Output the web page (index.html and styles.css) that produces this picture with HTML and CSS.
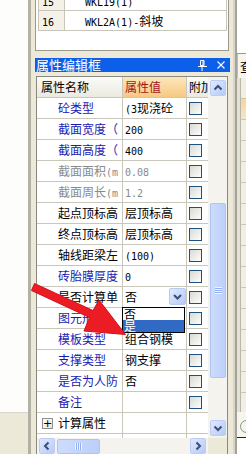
FILE: index.html
```html
<!DOCTYPE html>
<html>
<head>
<meta charset="utf-8">
<link rel="stylesheet" href="styles.css">
</head>
<body>
<div class="screen">
  <div class="leftwin"><div class="lw-top"></div><div class="lw-bot"></div></div>

  <div class="main">
    <div class="list">
      <div class="ltable">
        <div class="lrow"><div class="lnum"><span class="m">15</span></div><div class="lname"><span class="m">WKL19(1)</span></div></div>
        <div class="lrow"><div class="lnum"><span class="m">16</span></div><div class="lname"><span class="m">WKL2A(1)-</span>斜坡</div></div>
      </div>
    </div>

    <div class="titlebar">
      <span class="ttl">属性编辑框</span>
      <span class="ticons">
        <svg width="9" height="11" viewBox="0 0 9 11"><path d="M2.5 0.5h3.5v5h-3.5z" fill="none" stroke="#fff"/><path d="M5 1v4.5" stroke="#fff"/><path d="M0 6.5h9M4 6.5v4.5" stroke="#fff"/></svg>
        <svg width="8" height="8" viewBox="0 0 8 8"><path d="M0.5 0.5l7 7M7.5 0.5l-7 7" stroke="#fff" stroke-width="1.1"/></svg>
      </span>
    </div>

    <div class="grid">
      <div class="gtop">
        <div class="cols">
          <div class="row head">
            <div class="c-name hn">属性名称</div>
            <div class="c-val hv">属性值</div>
            <div class="c-chk hc">附加</div>
          </div>
          <div class="row"><div class="c-name"><span class="nm blue">砼类型</span></div><div class="c-val"><span class="m">(3</span>现浇砼</div><div class="c-chk"><span class="cb"></span></div></div>
          <div class="row"><div class="c-name"><span class="nm blue">截面宽度（mm）</span></div><div class="c-val"><span class="m">200</span></div><div class="c-chk"><span class="cb"></span></div></div>
          <div class="row"><div class="c-name"><span class="nm blue">截面高度（mm）</span></div><div class="c-val"><span class="m">400</span></div><div class="c-chk"><span class="cb"></span></div></div>
          <div class="row"><div class="c-name"><span class="nm gray">截面面积<span class="m">(m²)</span></span></div><div class="c-val gray"><span class="m">0.08</span></div><div class="c-chk"><span class="cb"></span></div></div>
          <div class="row"><div class="c-name"><span class="nm gray">截面周长<span class="m">(m)</span></span></div><div class="c-val gray"><span class="m">1.2</span></div><div class="c-chk"><span class="cb"></span></div></div>
          <div class="row"><div class="c-name"><span class="nm">起点顶标高</span></div><div class="c-val">层顶标高</div><div class="c-chk"><span class="cb"></span></div></div>
          <div class="row"><div class="c-name"><span class="nm">终点顶标高</span></div><div class="c-val">层顶标高</div><div class="c-chk"><span class="cb"></span></div></div>
          <div class="row"><div class="c-name"><span class="nm">轴线距梁左边线距离</span></div><div class="c-val"><span class="m">(100)</span></div><div class="c-chk"><span class="cb"></span></div></div>
          <div class="row"><div class="c-name"><span class="nm blue">砖胎膜厚度</span></div><div class="c-val"><span class="m">0</span></div><div class="c-chk"><span class="cb"></span></div></div>
          <div class="row"><div class="c-name"><span class="nm">是否计算单梁</span></div>
            <div class="c-val combo"><span class="cv">否</span>
              <span class="cbtn"><svg width="15" height="15" viewBox="0 0 15 15"><polyline points="4,6 7.5,9.5 11,6" fill="none" stroke="#3d4f78" stroke-width="2"/></svg></span>
              <div class="dd"><div class="dd-i">否</div><div class="dd-i sel">是</div></div>
            </div>
            <div class="c-chk"><span class="cb"></span></div></div>
          <div class="row"><div class="c-name"><span class="nm blue">图元形状</span></div><div class="c-val"></div><div class="c-chk"><span class="cb"></span></div></div>
          <div class="row"><div class="c-name"><span class="nm blue">模板类型</span></div><div class="c-val">组合钢模</div><div class="c-chk"><span class="cb"></span></div></div>
          <div class="row"><div class="c-name"><span class="nm blue">支撑类型</span></div><div class="c-val">钢支撑</div><div class="c-chk"><span class="cb"></span></div></div>
          <div class="row"><div class="c-name"><span class="nm blue">是否为人防</span></div><div class="c-val">否</div><div class="c-chk"><span class="cb"></span></div></div>
          <div class="row"><div class="c-name"><span class="nm blue">备注</span></div><div class="c-val"></div><div class="c-chk"><span class="cb"></span></div></div>
          <div class="row grp"><div class="c-name"><span class="pl">+</span><span class="nm">计算属性</span></div><div class="c-val"></div><div class="c-chk"></div></div>
          <div class="row grp"><div class="c-name"><span class="pl">+</span><span class="nm">显示样式</span></div><div class="c-val"></div><div class="c-chk"></div></div>
        </div>
        <div class="vscroll">
          <div class="sb-btn"><svg width="14" height="14" viewBox="0 0 14 14"><polyline points="3.5,8.5 7,5 10.5,8.5" fill="none" stroke="#3d4f78" stroke-width="2"/></svg></div>
          <div class="sb-gap1"></div>
          <div class="thumb v"><span class="grip"></span></div>
          <div class="sb-fill"></div>
          <div class="sb-btn"><svg width="14" height="14" viewBox="0 0 14 14"><polyline points="3.5,5.5 7,9 10.5,5.5" fill="none" stroke="#3d4f78" stroke-width="2"/></svg></div>
        </div>
      </div>
      <div class="hscroll">
        <div class="htrack">
          <div class="sb-btn"><svg width="14" height="14" viewBox="0 0 14 14"><polyline points="8.5,3.5 5,7 8.5,10.5" fill="none" stroke="#3d4f78" stroke-width="2"/></svg></div>
          <div class="thumb h"><span class="hgrip"></span></div>
          <div class="sb-fill"></div>
          <div class="sb-btn"><svg width="14" height="14" viewBox="0 0 14 14"><polyline points="5.5,3.5 9,7 5.5,10.5" fill="none" stroke="#3d4f78" stroke-width="2"/></svg></div>
        </div>
        <div class="corner"></div>
      </div>
    </div>
  </div>

  <div class="sep"></div>

  <div class="rightwin">
    <div class="rw-top"></div>
    <div class="rw-head">查</div>
    <div class="rw-rows">
      <div class="rw-row"></div>
      <div class="rw-row org"></div>
      <div class="rw-row"></div>
      <div class="rw-row"></div>
      <div class="rw-row"></div>
      <div class="rw-row"></div>
      <div class="rw-row"></div>
      <div class="rw-row"></div>
      <div class="rw-row"></div>
      <div class="rw-row"></div>
      <div class="rw-row"></div>
      <div class="rw-row"></div>
      <div class="rw-row"></div>
      <div class="rw-row"></div>
      <div class="rw-row"></div>
      <div class="rw-row"></div>
    </div>
    <div class="rw-icon"><span class="ring"></span></div>
    <div class="rw-line"></div>
    <div class="rw-bot"></div>
  </div>

  <svg class="arrow" width="246" height="454" viewBox="0 0 246 454">
    <polygon points="34.5,283.5 93,310.5 99,300 125.5,334.5 84,331 89.5,317.5 31.5,290.5" fill="#ec1c24" stroke="#d0121a" stroke-width="1" stroke-linejoin="round"/>
  </svg>
</div>
</body>
</html>
```
FILE: styles.css
```css
* { box-sizing: border-box; margin: 0; padding: 0; }
html, body { width: 246px; height: 454px; overflow: hidden; background: #fff; }
body { font-family: "Noto Sans CJK SC", "Noto Sans", sans-serif; font-size: 12px; color: #000; }

.screen { position: relative; display: flex; width: 246px; height: 454px; }

.m { font-family: "DejaVu Sans Mono", "Liberation Mono", monospace; font-size: 10px; }

/* left window */
.leftwin { width: 31px; display: flex; flex-direction: column; border-right: 3px solid #b3b1a4; }
.lw-top { height: 413px; background: #fdfdfb; border-bottom: 1px solid #d8d6cc; }
.lw-bot { flex: 1; background: #ece9d8; }

/* main column */
.main { width: 202px; background: #ece9d8; display: flex; flex-direction: column; }

.list { margin-left: 4px; width: 194px; height: 51px; background: #fff; border: 1px solid #9a988a; border-top: none; padding: 0 1px 0 2px; overflow: hidden; }
.ltable { margin-top: -9px; border-left: 1px solid #c8c6bb; border-right: 1px solid #c8c6bb; }
.lrow { display: flex; height: 20px; border-bottom: 1px solid #c8c6bb; line-height: 19px; }
.lnum { width: 26px; background: #f4f2e8; border-right: 1px solid #c8c6bb; padding-left: 3px; }
.lname { padding-left: 20px; white-space: nowrap; }

.titlebar { margin: 7px 0 0 4px; width: 195px; height: 14px; background: #0c5fe8; color: #fff; display: flex; align-items: center; font-size: 13px; line-height: 14px; padding-left: 1px; }
.ttl { white-space: nowrap; }
.ticons { margin-left: auto; display: flex; align-items: center; gap: 10px; padding-right: 5px; }

.grid { margin: 4px 0 0 5px; width: 192px; flex: 1; border: 1px solid #8a897f; border-bottom: none; display: flex; flex-direction: column; }
.gtop { display: flex; height: 361px; }
.cols { width: 171px; overflow: hidden; position: relative; background: #fff; }

.row { display: flex; height: 21px; border-bottom: 1px solid #c9c7bc; line-height: 20px; }
.c-name { width: 86px; border-right: 1px solid #c9c7bc; padding-left: 21px; white-space: nowrap; overflow: hidden; }
.c-val { width: 64px; border-right: 1px solid #c9c7bc; padding-left: 2px; white-space: nowrap; overflow: hidden; }
.c-chk { width: 21px; padding-left: 2px; white-space: nowrap; overflow: hidden; }
.nm { display: block; width: 60px; overflow: hidden; white-space: nowrap; }
.blue { color: #1a1ab0; }
.gray { color: #8a8a8a; }

.head .c-name, .head .c-chk { background: linear-gradient(#fbfbf8, #ebe9df); }
.head .hn { padding-left: 4px; }
.head .hv { background: linear-gradient(#fde6bb, #f6c981); color: #a3141a; padding-left: 2px; }

.cb { display: block; width: 13px; height: 13px; margin-top: 4px; border: 1px solid #1c5180; background: linear-gradient(135deg, #d9d9d3, #fdfdfd); }

.combo { overflow: visible; position: relative; display: flex; }
.cv { flex: 1; }
.cbtn { width: 17px; height: 17px; margin-top: 1px; border: 1px solid #b7caf5; border-radius: 2px; background: linear-gradient(135deg, #e3ecfe, #b5c9f7); display: flex; align-items: center; justify-content: center; }
.dd { position: absolute; left: -1px; top: 20px; width: 63px; height: 26px; border: 1px solid #000; background: #fff; z-index: 2; }
.dd-i { height: 12px; line-height: 12px; padding-left: 1px; font-size: 12px; }
.dd-i.sel { background: #316ac5; color: #fff; }

.grp .c-name { padding-left: 5px; display: flex; align-items: center; }
.pl { width: 11px; height: 11px; border: 1px solid #8f8f8f; background: linear-gradient(135deg, #ffffff, #e6e4da); font-size: 11px; line-height: 9px; text-align: center; font-family: "DejaVu Sans", sans-serif; margin-right: 5px; }

/* scrollbars */
.vscroll { width: 19px; background: #f4f3ee; display: flex; flex-direction: column; padding: 3px 1px 2px 2px; }
.sb-btn { width: 16px; height: 16px; flex: none; border-radius: 2px; border: 1px solid #bccdf5; background: linear-gradient(135deg, #e0eafe, #b6caf8); display: flex; align-items: center; justify-content: center; }
.sb-gap1 { height: 107px; flex: none; }
.sb-fill { flex: 1; }
.thumb { border: 1px solid #b0c4f2; border-radius: 2px; background: linear-gradient(90deg, #cddcfd, #bccffb); display: flex; align-items: center; justify-content: center; flex: none; }
.thumb.v { height: 175px; width: 16px; }
.thumb.h { width: 43px; height: 15px; margin-left: 2px; }
.grip { width: 7px; height: 7px; background: repeating-linear-gradient(#eef3fe 0 1px, #8fb0f2 1px 2px); }
.hgrip { width: 7px; height: 7px; background: repeating-linear-gradient(90deg, #eef3fe 0 1px, #8fb0f2 1px 2px); }

.hscroll { display: flex; height: 16px; }
.htrack { width: 171px; background: #f4f3ee; display: flex; align-items: center; padding: 0 2px; }
.corner { flex: 1; background: #ece9d8; }

/* separator & right window */
.sep { width: 4px; background: #a5a398; border-left: 2px solid #d9d6c9; }
.rightwin { flex: 1; display: flex; flex-direction: column; background: #fff; overflow: hidden; }
.rw-top { height: 54px; background: #fff; border-bottom: 1px solid #9c9a90; }
.rw-head { height: 24px; background: #f6f5f0; padding-left: 2px; line-height: 24px; font-size: 13px; border-left: 1px solid #c0beb2; white-space: nowrap; }
.rw-rows { height: 334px; overflow: hidden; border-left: 3px solid #e4e2d6; }
.rw-row { height: 21px; background: #f1efe2; border-bottom: 1px solid #c8c6ba; border-left: 1px solid #b9b7ab; }
.rw-row.org { background: linear-gradient(#f9d59a, #f3e6c8); }
.rw-icon { height: 25px; background: #f6f5f0; padding: 8px 0 0 3px; }
.ring { display: block; width: 13px; height: 13px; border: 1px solid #7e9a7e; border-radius: 50%; }
.rw-line { height: 1px; background: #222; }
.rw-bot { flex: 1; background: #fff; }

.arrow { position: absolute; left: 0; top: 0; pointer-events: none; z-index: 5; }
```
